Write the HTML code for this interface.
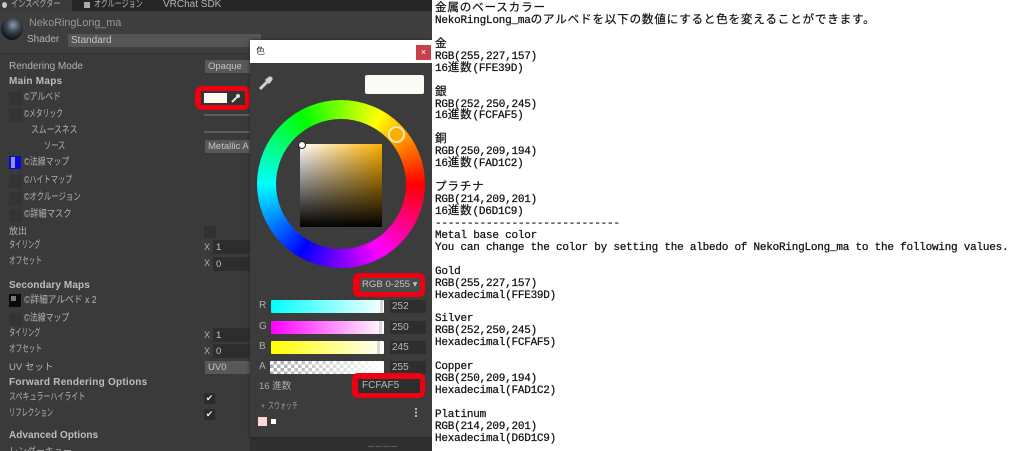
<!DOCTYPE html>
<html lang="ja"><head><meta charset="utf-8"><style>
html,body{margin:0;padding:0;background:#fff}
body{width:1024px;height:451px;overflow:hidden;position:relative;font-family:"Liberation Sans","Noto Sans CJK JP",sans-serif}
#l{position:absolute;left:0;top:0;width:432px;height:451px;background:#3a3a3a;overflow:hidden;filter:blur(.35px)}
#l div{position:absolute;white-space:nowrap}
.t{font-size:10px;color:#b4b4b4;line-height:12px;transform-origin:0 0}
.h{font-size:10px;font-weight:bold;color:#bdbdbd;line-height:12px;letter-spacing:.25px}
.sl{width:13px;height:13px;background:#343434;left:9px}
.dd{left:205px;width:45px;height:13px;background:#585858;color:#c4c4c4;font-size:9.5px;line-height:13px;padding-left:3px;box-sizing:border-box;overflow:hidden}
.inp{left:213px;width:37px;height:14px;background:#2d2d2d;color:#c4c4c4;font-size:9.5px;line-height:15px;padding-left:3px;box-sizing:border-box}
.x{left:204px;font-size:9px;color:#b4b4b4;line-height:12px}
.ck{left:204px;width:11px;height:11px;background:#2a2a2a;color:#eee;font-size:9px;line-height:11px;text-align:center}
.bar{left:271px;width:113px;height:13px;border-radius:1px}
.v{left:390px;width:34px;height:13px;background:#2e2e2e;color:#b8b8b8;font-size:10px;line-height:13px;padding-left:2px}
.lb{left:259px;font-size:10px;color:#aaa;line-height:12px}
.hd{width:3px;height:13px;background:#ccc;opacity:.75}
pre{position:absolute;left:435px;top:4px;margin:0;font:11px/11.93px "Liberation Mono",monospace;letter-spacing:-.23px;color:#111;-webkit-text-stroke:.25px #111}
pre b{font:normal 11.6px/0 "Noto Sans CJK JP",sans-serif;letter-spacing:.78px;-webkit-text-stroke:.2px #111}
</style></head><body>
<div id="l">
<div style="left:0;top:0;width:72px;height:11px;background:#3a3a3a"></div>
<div style="left:72px;top:0;width:360px;height:11px;background:#262626"></div>
<div style="left:2px;top:2px;width:5px;height:6px;border-radius:50%;background:#c8c8c8"></div>
<div class="t" style="left:11px;top:-1px;font-size:9.5px;transform:scaleX(.76)">インスペクター</div>
<div style="left:84px;top:2px;width:6px;height:6px;background:#aaa"></div>
<div class="t" style="left:94px;top:-1px;font-size:9.5px;transform:scaleX(.74)">オクルージョン</div>
<div class="t" style="left:163px;top:-1px;font-size:10px">VRChat SDK</div>
<div style="left:0;top:11px;width:432px;height:42px;background:#3e3e3e;border-bottom:1px solid #303030"></div>
<div style="left:1px;top:17px;width:22px;height:23px;border-radius:50%;background:radial-gradient(circle at 55% 35%,#8a9cb0 0,#3c4654 35%,#0f1218 75%)"></div>
<div class="t" style="left:29px;top:17px;font-size:10.8px;color:#989898">NekoRingLong_ma</div>
<div class="t" style="left:27px;top:34px;font-size:10px">Shader</div>
<div style="left:68px;top:34px;width:190px;height:13px;background:#555;color:#c6c6c6;font-size:10px;line-height:13px;padding-left:3px">Standard</div>

<div class="t" style="left:9px;top:61px;font-size:10px">Rendering Mode</div>
<div class="dd" style="top:60px">Opaque</div>
<div class="h" style="left:9px;top:76px">Main Maps</div>
<div class="sl" style="top:92px"></div><div class="t" style="left:24px;top:92px;transform:scaleX(.78)">©アルベド</div>
<div style="left:195px;top:86px;width:55px;height:24px;background:#ee0010;border-radius:7px"></div>
<div style="left:201px;top:91px;width:44px;height:14px;background:#333"></div>
<div style="left:204px;top:93px;width:23px;height:10px;background:#fcfaf5"></div>
<svg style="position:absolute;left:230px;top:93px" width="11" height="11" viewBox="0 0 11 11"><path d="M2 9 L7 4" stroke="#ddd" stroke-width="2" fill="none"/><circle cx="8" cy="3" r="2" fill="#ddd"/></svg>
<div class="sl" style="top:109px"></div><div class="t" style="left:24px;top:109px;transform:scaleX(.68)">©メタリック</div>
<div style="left:204px;top:114px;width:46px;height:2px;background:#5c5c5c"></div>
<div class="t" style="left:31px;top:125px;transform:scaleX(.78)">スムースネス</div>
<div style="left:204px;top:131px;width:46px;height:2px;background:#5c5c5c"></div>
<div class="t" style="left:44px;top:141px;transform:scaleX(.72)">ソース</div>
<div class="dd" style="top:140px">Metallic A</div>

<div style="left:9px;top:156px;width:12px;height:13px;background:#0b0bd0"></div>
<div style="left:11px;top:157px;width:4px;height:11px;background:#8f8fff"></div>
<div class="t" style="left:24px;top:157px;transform:scaleX(.79)">©法線マップ</div>
<div class="sl" style="top:175px"></div><div class="t" style="left:24px;top:175px;transform:scaleX(.72)">©ハイトマップ</div>
<div class="sl" style="top:192px"></div><div class="t" style="left:24px;top:192px;transform:scaleX(.74)">©オクルージョン</div>
<div class="sl" style="top:209px"></div><div class="t" style="left:24px;top:209px;transform:scaleX(.83)">©詳細マスク</div>
<div class="t" style="left:9px;top:225px;font-size:9px">放出</div>
<div style="left:204px;top:226px;width:12px;height:12px;background:#303030"></div>
<div class="t" style="left:9px;top:240px;transform:scaleX(.63)">タイリング</div>
<div class="x" style="top:241px">X</div><div class="inp" style="top:240px">1</div>
<div class="t" style="left:9px;top:256px;transform:scaleX(.66)">オフセット</div>
<div class="x" style="top:257px">X</div><div class="inp" style="top:257px">0</div>

<div class="h" style="left:9px;top:280px;letter-spacing:.1px">Secondary Maps</div>
<div style="left:9px;top:294px;width:12px;height:13px;background:#0a0a0a"></div>
<div style="left:11px;top:296px;width:5px;height:5px;background:#777"></div>
<div class="t" style="left:24px;top:295px;transform:scaleX(.87)">©詳細アルベド x 2</div>
<div class="sl" style="top:313px"></div><div class="t" style="left:24px;top:313px;transform:scaleX(.79)">©法線マップ</div>
<div class="t" style="left:9px;top:328px;transform:scaleX(.63)">タイリング</div>
<div class="x" style="top:329px">X</div><div class="inp" style="top:328px">1</div>
<div class="t" style="left:9px;top:344px;transform:scaleX(.66)">オフセット</div>
<div class="x" style="top:345px">X</div><div class="inp" style="top:344px">0</div>
<div class="t" style="left:9px;top:362px;font-size:9.5px">UV セット</div>
<div class="dd" style="top:361px">UV0</div>
<div class="h" style="left:9px;top:377px">Forward Rendering Options</div>
<div class="t" style="left:9px;top:392px;transform:scaleX(.7)">スペキュラーハイライト</div>
<div class="ck" style="top:393px">✔</div>
<div class="t" style="left:9px;top:408px;transform:scaleX(.63)">リフレクション</div>
<div class="ck" style="top:409px">✔</div>
<div class="h" style="left:9px;top:430px;letter-spacing:.05px">Advanced Options</div>
<div class="t" style="left:9px;top:445px;font-size:9px">レンダーキュー</div>
<div style="left:250px;top:436px;width:182px;height:15px;background:#303030"></div>
<div class="t" style="left:368px;top:441px;font-size:6px;color:#999">— — — —</div>

<!-- dialog -->
<div style="left:250px;top:40px;width:182px;height:397px;background:#3c3c3c;box-shadow:0 0 3px #222"></div>
<div style="left:250px;top:40px;width:182px;height:23px;background:#fff"></div>
<div style="left:256px;top:45px;font-size:9px;color:#333;line-height:12px">色</div>
<div style="left:416px;top:45px;width:15px;height:15px;background:#c8404a;color:#fff;font-size:9px;line-height:15px;text-align:center">×</div>
<svg style="position:absolute;left:258px;top:75px" width="16" height="16" viewBox="0 0 16 16"><path d="M2 14 L9 7" stroke="#cfcfcf" stroke-width="3" fill="none"/><path d="M8 4 L12 8" stroke="#cfcfcf" stroke-width="3"/><circle cx="12" cy="4" r="2.6" fill="#cfcfcf"/></svg>
<div style="left:365px;top:75px;width:59px;height:19px;background:#fcfaf5;border-radius:2px"></div>
<div style="left:257px;top:100px;width:168px;height:168px;border-radius:50%;background:conic-gradient(#80ff00 0deg,#ffff00 30deg,#ff0000 90deg,#ff00ff 150deg,#0000ff 210deg,#00ffff 270deg,#00ff00 330deg,#80ff00 360deg)"></div>
<div style="left:276px;top:119px;width:130px;height:130px;border-radius:50%;background:#3c3c3c"></div>
<div style="left:300px;top:144px;width:82px;height:83px;background:linear-gradient(to bottom,rgba(0,0,0,0),#000),linear-gradient(to right,#fff,#ffb000)"></div>
<div style="left:388px;top:126px;width:13px;height:13px;border:2px solid #f2e6b0;border-radius:50%;background:#f5b000"></div>
<div style="left:298px;top:141px;width:6px;height:6px;border:1.5px solid #222;border-radius:50%;background:#fcfaf5"></div>

<div style="left:353px;top:273px;width:72px;height:24px;background:#ee0010;border-radius:6px"></div>
<div style="left:360px;top:278px;width:60px;height:14px;background:#4a4a4a;color:#c4c4c4;font-size:9.6px;line-height:14px;padding-left:2px;box-sizing:border-box">RGB 0-255 ▾</div>

<div class="lb" style="top:300px">R</div>
<div class="bar" style="top:300px;background:linear-gradient(to right,#00ffff,#fff)"></div>
<div class="hd" style="left:380px;top:300px"></div>
<div class="v" style="top:300px">252</div>
<div class="lb" style="top:321px">G</div>
<div class="bar" style="top:321px;background:linear-gradient(to right,#ff00ff,#fff)"></div>
<div class="hd" style="left:379px;top:321px"></div>
<div class="v" style="top:321px">250</div>
<div class="lb" style="top:341px">B</div>
<div class="bar" style="top:341px;background:linear-gradient(to right,#ffff00,#fff)"></div>
<div class="hd" style="left:377px;top:341px"></div>
<div class="v" style="top:341px">245</div>
<div class="lb" style="top:361px">A</div>
<div class="bar" style="top:361px;left:270px;width:114px;background:linear-gradient(to right,rgba(255,255,255,0),#fff),repeating-conic-gradient(#aaa 0 25%,#fff 0 50%) 0 0/7px 7px"></div>
<div class="v" style="top:361px">255</div>
<div class="lb" style="top:381px;font-size:9.5px">16 進数</div>
<div style="left:352px;top:373px;width:73px;height:25px;background:#ee0010;border-radius:6px"></div>
<div style="left:358px;top:379px;width:62px;height:14px;background:#2e2e2e;color:#b8b8b8;font-size:10px;line-height:14px;padding-left:4px;box-sizing:border-box">FCFAF5</div>
<div style="left:260px;top:402px;font-size:6px;color:#777;line-height:10px">▼</div>
<div class="t" style="left:268px;top:401px;font-size:9.5px;color:#999;transform:scaleX(.63)">スウォッチ</div>
<div style="left:415px;top:408px;width:2px;height:2px;background:#bbb;box-shadow:0 3.5px #bbb,0 7px #bbb"></div>
<div style="left:258px;top:417px;width:9px;height:9px;background:#fcd8d8"></div>
<div style="left:271px;top:419px;width:5px;height:5px;background:#fff"></div>
</div>
<div style="position:absolute;left:432px;top:0;width:592px;height:451px;background:#fff"></div>
<pre><b>金属のベースカラー</b>
NekoRingLong_ma<b>のアルベドを以下の数値にすると色を変えることができます。</b>

<b>金</b>
RGB(255,227,157)
16<b>進数</b>(FFE39D)

<b>銀</b>
RGB(252,250,245)
16<b>進数</b>(FCFAF5)

<b>銅</b>
RGB(250,209,194)
16<b>進数</b>(FAD1C2)

<b>プラチナ</b>
RGB(214,209,201)
16<b>進数</b>(D6D1C9)
-----------------------------
Metal base color
You can change the color by setting the albedo of NekoRingLong_ma to the following values.

Gold
RGB(255,227,157)
Hexadecimal(FFE39D)

Silver
RGB(252,250,245)
Hexadecimal(FCFAF5)

Copper
RGB(250,209,194)
Hexadecimal(FAD1C2)

Platinum
RGB(214,209,201)
Hexadecimal(D6D1C9)</pre>
</body></html>
